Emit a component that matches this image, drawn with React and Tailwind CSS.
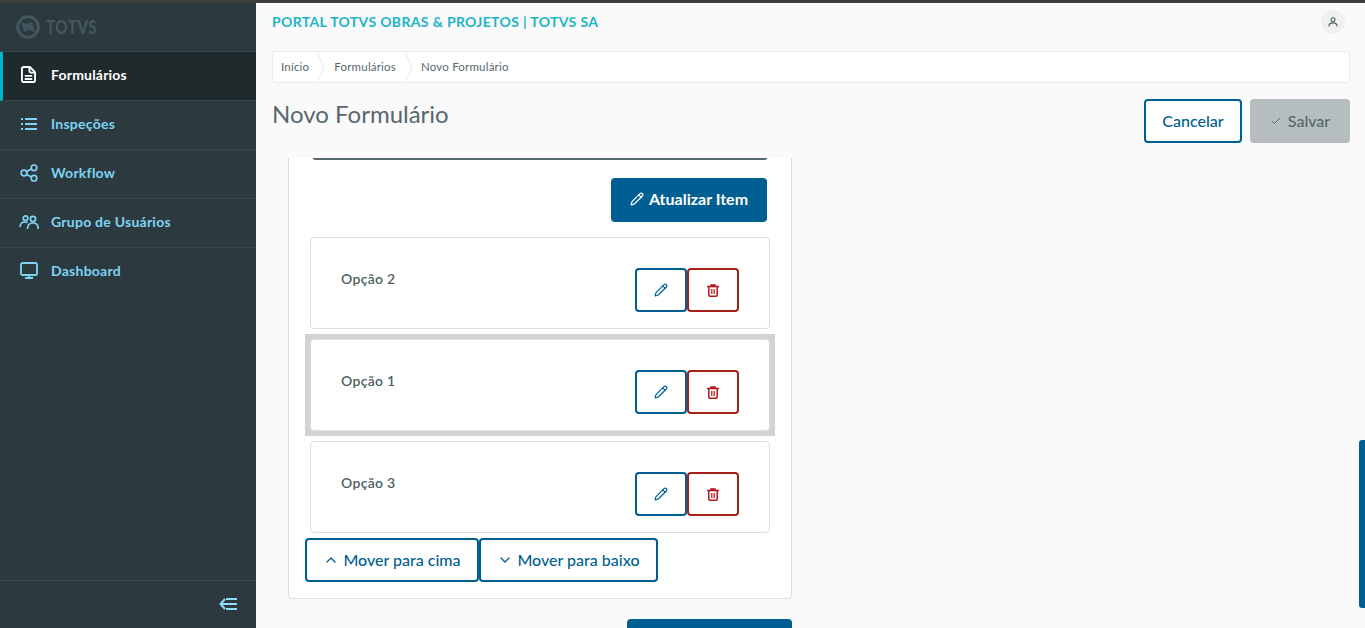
import { Pencil, Check, ChevronUp, ChevronDown } from "lucide-react";

function FormIcon() {
  return (
    <svg width="15" height="17" viewBox="0 0 16 18" fill="none" stroke="currentColor" strokeWidth="2" strokeLinejoin="round">
      <path d="M3 1 H9.5 L15 6.5 V15 Q15 17 13 17 H3 Q1 17 1 15 V3 Q1 1 3 1 Z" />
      <path d="M9 1 V5 Q9 7 11 7 H15" />
      <path d="M4 10.5 H12 M4 13.8 H12" />
    </svg>
  );
}

function ListIcon() {
  return (
    <svg width="16" height="12" viewBox="0 0 16 12" fill="none" stroke="currentColor" strokeWidth="2">
      <path d="M0 1 H2 M0 6 H2 M0 11 H2 M4 1 H16 M4 6 H16 M4 11 H16" />
    </svg>
  );
}

function ShareIcon() {
  return (
    <svg width="18" height="18" viewBox="0 0 18 18" fill="none" stroke="currentColor" strokeWidth="1.7">
      <circle cx="4" cy="9" r="2.9" />
      <circle cx="14" cy="3.8" r="2.8" />
      <circle cx="14" cy="14.2" r="2.8" />
      <path d="M6.6 7.6 L11.5 5.1 M6.6 10.4 L11.5 12.9" />
    </svg>
  );
}

function UsersIcon() {
  return (
    <svg width="20" height="14" viewBox="0 0 20 14" fill="none" stroke="currentColor" strokeWidth="1.7">
      <circle cx="6.5" cy="3.2" r="2.3" />
      <circle cx="14" cy="4" r="2.6" />
      <path d="M1 12 Q1.3 7 6 7 Q7.5 7 8.5 7.7" />
      <path d="M8.5 14 Q8.5 8 14 8 Q19.3 8 19.3 14" />
    </svg>
  );
}

function MonitorIcon() {
  return (
    <svg width="18" height="17" viewBox="0 0 18 17" fill="none" stroke="currentColor" strokeWidth="1.8">
      <rect x="1" y="1" width="16" height="12" rx="1.6" />
      <path d="M9 13 V16 M5 16 H13" />
    </svg>
  );
}

function TrashIcon() {
  return (
    <svg width="12" height="13" viewBox="0 0 12 13" fill="none" stroke="currentColor">
      <path d="M0 2.5 H12 M4 2.5 V1 H8 V2.5" strokeWidth="1.5" />
      <path d="M1.8 3 V11 Q1.8 12.2 3 12.2 H9 Q10.2 12.2 10.2 11 V3" strokeWidth="1.5" />
      <path d="M4.8 5 V10 M7.2 5 V10" strokeWidth="1.2" />
    </svg>
  );
}

function UserIcon() {
  return (
    <svg width="10" height="10" viewBox="0 0 11 11" fill="none" stroke="currentColor" strokeWidth="1.2">
      <circle cx="5.5" cy="3" r="2.2" />
      <path d="M1 10.5 Q1 6.5 5.5 6.5 Q10 6.5 10 10.5" />
    </svg>
  );
}

const navItems = [
  { label: "Inspeções", icon: ListIcon },
  { label: "Workflow", icon: ShareIcon },
  { label: "Grupo de Usuários", icon: UsersIcon },
  { label: "Dashboard", icon: MonitorIcon },
];

const options = [
  { label: "Opção 2" },
  { label: "Opção 1", selected: true },
  { label: "Opção 3" },
];

function OptionCard({ label }) {
  return (
    <div className="h-full bg-white border border-[#dae0e1] rounded-[4px] flex justify-between pl-[30px] pr-[30px] pt-[30px]">
      <span className="text-[14px] leading-[20px] font-semibold text-[#4d5f64] mt-[1px] tracking-[0.3px]">{label}</span>
      <div className="flex">
        <button className="w-[52px] h-[44px] bg-white border-2 border-[#005f92] rounded-[4px] flex items-center justify-center text-[#005f92]">
          <Pencil size={14} strokeWidth={2} />
        </button>
        <button className="w-[52px] h-[44px] bg-white border-2 border-[#a8201a] rounded-[4px] flex items-center justify-center text-[#b3161c]">
          <TrashIcon />
        </button>
      </div>
    </div>
  );
}

function Sep() {
  return (
    <svg width="8" height="30" viewBox="0 0 8 30" fill="none" stroke="#e8eaea" strokeWidth="1" className="shrink-0">
      <path d="M0 0 L7 15 L0 30" />
    </svg>
  );
}

export default function App() {
  return (
    <div className="h-[628px] w-[1365px] overflow-hidden flex flex-col bg-[#fafafa] font-['Lato',sans-serif] relative">
      <div className="h-[3px] bg-[#3d3d3d] shrink-0" />
      <div className="flex flex-1 min-h-0">
        <aside className="w-[256px] shrink-0 bg-[#2c3a3f] flex flex-col">
          <div className="h-[49px] flex items-center pl-[16px] pb-[1px] gap-[6px] text-[#41575d] border-b border-[#38494e]">
            <svg width="24" height="24" viewBox="0 0 24 24" fill="none" className="shrink-0">
              <circle cx="12" cy="12" r="10.3" stroke="currentColor" strokeWidth="3" />
              <path fill="currentColor" d="M4 7 L11 9 L16 7 L17.5 12.5 L20 17 L13 15 L8 17 L6.5 11.5 Z" />
            </svg>
            <span className="text-[19px] leading-none font-black tracking-[0.6px] scale-x-[0.8] origin-left">TOTVS</span>
          </div>
          <div className="h-[49px] pb-[3px] bg-[#1f2a2d] border-l-[3px] border-[#00b5c8] border-b border-b-[#38494e] flex items-center text-white">
            <span className="w-[48px] pl-[3px] flex justify-center shrink-0"><FormIcon /></span>
            <span className="text-[14px] font-bold tracking-[0.2px]">Formulários</span>
          </div>
          {navItems.map(({ label, icon: Icon }, i) => (
            <div key={label} className={`h-[49px] pb-[3px] flex items-center text-[#7fd3f5] border-b ${i < 3 ? "border-[#38494e]" : "border-transparent"}`}>
              <span className="w-[51px] pl-[6px] flex justify-center shrink-0"><Icon /></span>
              <span className="text-[14px] font-bold tracking-[0.25px]">{label}</span>
            </div>
          ))}
          <div className="mt-auto h-[48px] pb-[2px] border-t border-[#38494e] flex items-center justify-end pr-[19px] text-[#8fdcfb]">
            <svg width="18" height="12" viewBox="0 0 18 12" fill="none" stroke="currentColor" strokeWidth="2">
              <path d="M6 1 L1.5 6 L6 11 M2 6 H18 M7 1 H18 M7 11 H18" />
            </svg>
          </div>
        </aside>
        <main className="flex-1 min-w-0 flex flex-col">
          <div className="h-[48px] shrink-0 flex items-start justify-between pl-[16px] pr-[20px]">
            <span className="text-[14px] leading-[20px] mt-[9px] font-bold text-[#1bb5c8] tracking-[0.35px]">PORTAL TOTVS OBRAS &amp; PROJETOS | TOTVS SA</span>
            <div className="w-[24px] h-[24px] mt-[7px] rounded-full bg-[#f0f0f0] flex items-center justify-center text-[#4a5f65]">
              <UserIcon />
            </div>
          </div>
          <div className="ml-[16px] mr-[15px] h-[32px] shrink-0 bg-white border border-[#e8eaea] rounded-[3px] flex items-center text-[11.5px] text-[#56686d] tracking-[0.2px]">
            <span className="pl-[8px] pr-[8px]">Início</span>
            <Sep />
            <span className="pl-[9px] pr-[9px]">Formulários</span>
            <Sep />
            <span className="pl-[8px]">Novo Formulário</span>
          </div>
          <div className="ml-[16px] mr-[15px] h-[75px] shrink-0 flex justify-between pt-[16px]">
            <h1 className="text-[24px] leading-[32px] text-[#56686d] font-normal -mt-[1px]">Novo Formulário</h1>
            <div className="flex gap-[8px]">
              <button className="w-[98px] h-[44px] bg-white border-2 border-[#005f92] rounded-[4px] text-[16px] font-medium text-[#005f92]">Cancelar</button>
              <button className="w-[100px] h-[44px] bg-[#b5bdbf] rounded-[4px] text-[16px] font-medium text-[#56686d] flex items-center justify-center gap-[6px]">
                <Check size={12} strokeWidth={2} />
                Salvar
              </button>
            </div>
          </div>
          <div className="flex-1 min-h-0 overflow-hidden pl-[32px]">
            <div className="w-[504px] h-[441px] bg-white border border-[#dae0e1] border-t-0 rounded-b-[4px] pl-[16px] pr-[24px] flex flex-col">
              <div className="h-[2px] bg-[#56686d] ml-[8px] rounded-b-[4px] shrink-0" />
              <div className="flex justify-end pt-[18px] shrink-0">
                <button className="w-[156px] h-[44px] pb-[2px] bg-[#005f92] rounded-[4px] text-white text-[16px] font-bold flex items-center justify-center gap-[5px]">
                  <Pencil size={14} strokeWidth={2} />
                  Atualizar Item
                </button>
              </div>
              <div className="mt-[10px] flex flex-col">
                {options.map((o) => (
                  <div key={o.label} className={`h-[102px] w-[470px] p-[5px] ${o.selected ? "bg-[#d3d3d3]" : ""}`}>
                    <OptionCard label={o.label} />
                  </div>
                ))}
              </div>
              <div className="flex">
                <button className="w-[174px] h-[44px] bg-white border-2 border-[#005f92] rounded-[4px] text-[16px] font-medium text-[#005f92] flex items-center justify-center gap-[4px]">
                  <ChevronUp size={16} strokeWidth={2} />
                  Mover para cima
                </button>
                <button className="w-[179px] h-[44px] bg-white border-2 border-[#005f92] rounded-[4px] text-[16px] font-medium text-[#005f92] flex items-center justify-center gap-[4px]">
                  <ChevronDown size={16} strokeWidth={2} />
                  Mover para baixo
                </button>
              </div>
            </div>
            <div className="w-[504px] flex justify-end mt-[20px]">
              <div className="w-[165px] h-[44px] bg-[#005f92] rounded-[4px]" />
            </div>
          </div>
        </main>
      </div>
      <div className="absolute right-0 top-[440px] w-[6px] h-[168px] bg-[#005f92] rounded-l-[3px]" />
    </div>
  );
}
